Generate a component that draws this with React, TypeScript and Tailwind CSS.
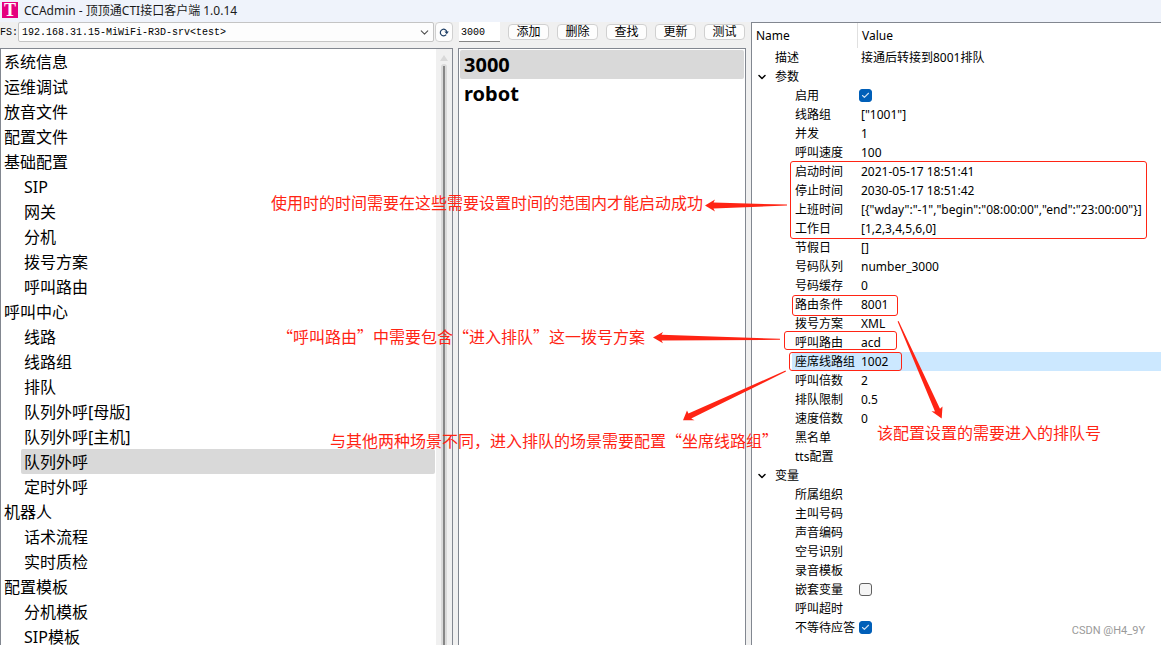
import { useState } from "react";
import { Check, ChevronDown } from "lucide-react";

interface TreeItem {
  label: string;
  child?: boolean;
}

interface Property {
  name: string;
  value?: string;
  checked?: boolean;
  group?: boolean;
  top?: boolean;
}

const TREE: TreeItem[] = [
  { label: "系统信息" },
  { label: "运维调试" },
  { label: "放音文件" },
  { label: "配置文件" },
  { label: "基础配置" },
  { label: "SIP", child: true },
  { label: "网关", child: true },
  { label: "分机", child: true },
  { label: "拨号方案", child: true },
  { label: "呼叫路由", child: true },
  { label: "呼叫中心" },
  { label: "线路", child: true },
  { label: "线路组", child: true },
  { label: "排队", child: true },
  { label: "队列外呼[母版]", child: true },
  { label: "队列外呼[主机]", child: true },
  { label: "队列外呼", child: true },
  { label: "定时外呼", child: true },
  { label: "机器人" },
  { label: "话术流程", child: true },
  { label: "实时质检", child: true },
  { label: "配置模板" },
  { label: "分机模板", child: true },
  { label: "SIP模板", child: true },
];

const PROPERTIES: Property[] = [
  { name: "描述", value: "接通后转接到8001排队", top: true },
  { name: "参数", group: true },
  { name: "启用", checked: true },
  { name: "线路组", value: '["1001"]' },
  { name: "并发", value: "1" },
  { name: "呼叫速度", value: "100" },
  { name: "启动时间", value: "2021-05-17 18:51:41" },
  { name: "停止时间", value: "2030-05-17 18:51:42" },
  { name: "上班时间", value: '[{"wday":"-1","begin":"08:00:00","end":"23:00:00"}]' },
  { name: "工作日", value: "[1,2,3,4,5,6,0]" },
  { name: "节假日", value: "[]" },
  { name: "号码队列", value: "number_3000" },
  { name: "号码缓存", value: "0" },
  { name: "路由条件", value: "8001" },
  { name: "拨号方案", value: "XML" },
  { name: "呼叫路由", value: "acd" },
  { name: "座席线路组", value: "1002" },
  { name: "呼叫倍数", value: "2" },
  { name: "排队限制", value: "0.5" },
  { name: "速度倍数", value: "0" },
  { name: "黑名单" },
  { name: "tts配置" },
  { name: "变量", group: true },
  { name: "所属组织" },
  { name: "主叫号码" },
  { name: "声音编码" },
  { name: "空号识别" },
  { name: "录音模板" },
  { name: "嵌套变量", checked: false },
  { name: "呼叫超时" },
  { name: "不等待应答", checked: true },
];

const ACTIONS = ["添加", "删除", "查找", "更新", "测试"];
const QUEUES = ["3000", "robot"];

function TitleBar() {
  return (
    <header className="flex h-[22px] shrink-0 items-start gap-[6px] bg-[#eff3fb] pl-[2px] pt-[2px]">
      <span className="size-4 bg-[#e5007f] text-center font-['Liberation_Serif',serif] text-[18px] font-bold leading-4 text-white">
        T
      </span>
      <h1 className="text-[12px] leading-[18px] text-[#1a1a1a]">CCAdmin - 顶顶通CTI接口客户端 1.0.14</h1>
    </header>
  );
}

function ServerBar() {
  return (
    <div className="flex h-[26px] shrink-0 items-start">
      <label htmlFor="server" className="w-[18px] shrink-0 font-['Liberation_Mono',monospace] text-[10px] leading-[22px]">
        FS:
      </label>
      <div className="grid h-5 min-w-0 flex-1">
        <select
          id="server"
          className="h-5 w-full appearance-none rounded-[2px] border border-[#c4c4c4] bg-[#fdfdfd] pl-[3px] pt-[2px] font-['Liberation_Mono',monospace] text-[10px] leading-4 [grid-area:1/1]"
        >
          <option>192.168.31.15-MiWiFi-R3D-srv&lt;test&gt;</option>
        </select>
        <ChevronDown
          size={13}
          strokeWidth={2}
          className="pointer-events-none mr-[3px] self-center justify-self-end text-[#505050] [grid-area:1/1]"
        />
      </div>
      <button
        type="button"
        aria-label="刷新"
        className="ml-px flex h-5 w-[18px] items-center justify-center rounded-[4px] border border-[#d0d0d0] bg-[#fdfdfd] pt-px"
      >
        <svg width="10" height="9" viewBox="0 0 10 9" fill="none" stroke="#1f3f66" strokeWidth="1.2">
          <path d="M7.2 6.6A3.3 3.3 0 1 1 7.9 4.2" />
          <path d="M5.4 3.6H9.8L7.8 6.2Z" fill="#1f3f66" stroke="none" />
        </svg>
      </button>
    </div>
  );
}

function NavTree() {
  const [active, setActive] = useState("队列外呼");

  return (
    <nav className="flex min-h-0 flex-1 overflow-hidden border border-b-0 border-[#828790] bg-white">
      <ul className="min-w-0 flex-1 pr-px">
        {TREE.map((item) => (
          <li key={item.label} className={item.child ? "pl-5" : ""}>
            <button
              type="button"
              onClick={() => setActive(item.label)}
              className={`block h-[25px] w-full rounded-[2px] pl-[3px] pt-[2px] text-left text-[16px] leading-[23px] ${
                active === item.label ? "bg-[#d9d9d9]" : ""
              }`}
            >
              {item.label}
            </button>
          </li>
        ))}
      </ul>
      <div className="flex w-4 flex-col items-center bg-[#f0f0f0] pt-[6px]">
        <svg width="8" height="6" viewBox="0 0 8 6" className="shrink-0">
          <path d="M4 0 8 6H0Z" fill="#d9d9d9" />
        </svg>
        <div className="mt-[3px] flex w-[6px] flex-1 justify-center rounded-t bg-[#d9d9d9] pt-[2px]">
          <div className="w-[2px] bg-[#868686]" />
        </div>
      </div>
    </nav>
  );
}

function QueuePanel() {
  const [current, setCurrent] = useState("3000");

  return (
    <section className="flex min-h-0 min-w-0 flex-col">
      <div className="flex h-[26px] shrink-0 items-start justify-between px-px">
        <input
          aria-label="队列号码"
          defaultValue="3000"
          className="h-5 w-[41px] border-b border-[#868686] bg-white px-[2px] pt-[2px] font-['Liberation_Mono',monospace] text-[10px] leading-4"
        />
        {ACTIONS.map((action) => (
          <button
            key={action}
            type="button"
            className="mt-[2px] h-4 w-[41px] rounded-[4px] border border-[#d0d0d0] bg-[#fdfdfd] text-center text-[12px] leading-[14px]"
          >
            {action}
          </button>
        ))}
      </div>
      <ul className="min-h-0 flex-1 overflow-hidden border border-b-0 border-[#828790] bg-white p-px">
        {QUEUES.map((queue) => (
          <li key={queue}>
            <button
              type="button"
              onClick={() => setCurrent(queue)}
              className={`block h-[29px] w-full rounded-[2px] pl-1 text-left text-[20px] font-bold leading-[29px] ${
                current === queue ? "bg-[#d9d9d9]" : ""
              }`}
            >
              {queue}
            </button>
          </li>
        ))}
      </ul>
    </section>
  );
}

function PropertyCheckbox({ id, checked }: { id: string; checked: boolean }) {
  return (
    <span className="grid w-[13px]">
      <input
        id={id}
        type="checkbox"
        defaultChecked={checked}
        className="peer size-[13px] appearance-none rounded-[3px] border border-[#606060] bg-[#f5f5f5] [grid-area:1/1] checked:border-[#005fb8] checked:bg-[#005fb8]"
      />
      <Check
        size={9}
        strokeWidth={3}
        className="pointer-events-none invisible place-self-center text-[#cfe2f4] [grid-area:1/1] peer-checked:visible"
      />
    </span>
  );
}

function PropertyRow({ property, selected, onSelect }: { property: Property; selected: boolean; onSelect: () => void }) {
  const { name, value, checked, group, top } = property;
  const isCheckbox = checked !== undefined;

  return (
    <tr onClick={onSelect} className="h-[19px]">
      <td className="p-0">
        {group || top ? (
          <div className="flex h-[19px] items-center pl-1">
            <span className="flex w-[19px]">{group && <ChevronDown size={12} strokeWidth={3} />}</span>
            {name}
          </div>
        ) : (
          <div className={`ml-10 h-[19px] whitespace-nowrap pl-[3px] ${selected ? "bg-[#cce8ff]" : ""}`}>
            {isCheckbox ? <label htmlFor={name}>{name}</label> : name}
          </div>
        )}
      </td>
      <td className={`whitespace-nowrap py-0 pr-0 ${isCheckbox ? "pl-px" : "pl-[3px]"} ${selected ? "bg-[#cce8ff]" : ""}`}>
        {isCheckbox ? <PropertyCheckbox id={name} checked={checked} /> : value}
      </td>
    </tr>
  );
}

function PropertyPanel() {
  const [selected, setSelected] = useState("座席线路组");

  return (
    <section className="min-h-0 min-w-0 overflow-hidden border-l border-t border-[#828790] bg-white">
      <table className="w-full table-fixed border-separate border-spacing-0 text-[12px] leading-[19px]">
        <thead>
          <tr className="h-[25px] text-left">
            <th className="w-[106px] border-r border-[#e0e0e0] py-0 pl-1 font-normal">Name</th>
            <th className="py-0 pl-1 font-normal">Value</th>
          </tr>
        </thead>
        <tbody>
          {PROPERTIES.map((property) => (
            <PropertyRow
              key={property.name}
              property={property}
              selected={selected === property.name}
              onSelect={() => setSelected(property.name)}
            />
          ))}
        </tbody>
      </table>
    </section>
  );
}

// Red notes drawn on top of the window
function Annotations() {
  return (
    <div className="pointer-events-none absolute inset-0 overflow-hidden whitespace-nowrap font-['Noto_Sans_CJK_SC',sans-serif] text-[16px] leading-5 text-[#ff2414]">
      <div className="absolute left-[790px] top-[161px] h-[78px] w-[357px] rounded-[3px] border border-current" />
      <div className="absolute left-[792px] top-[295px] h-[21px] w-[106px] rounded-[3px] border border-current" />
      <div className="absolute left-[784px] top-[331px] h-[19px] w-[113px] rounded-[3px] border border-current" />
      <div className="absolute left-[789px] top-[352px] h-[19px] w-[113px] rounded-[3px] border border-current" />

      <svg width="1161" height="645" viewBox="0 0 1161 645" fill="currentColor" className="absolute left-0 top-0">
        <path d="M705 205.5 715 199.5 713.5 202.6 787 204.6V205.6L713.5 208.6 715 211.5Z" />
        <path d="M653 337.5 663 332 661.5 334.8 780 338.8V339.8L661.5 340.6 663 343.2Z" />
        <path d="M683 420.3 687 410.5 688.4 413.6 785.5 370.6 786 371.6 691.2 418.6 694.5 420.3Z" />
        <path d="M941.7 418.5 931.5 411.2 935 411.4 897.6 321.4 898.6 321 940 408.8 942.5 406.5Z" />
      </svg>

      <p className="absolute left-[271px] top-[192px]">使用时的时间需要在这些需要设置时间的范围内才能启动成功</p>
      <p className="absolute left-[277px] top-[326px]">“呼叫路由”中需要包含“进入排队”这一拨号方案</p>
      <p className="absolute left-[330px] top-[430px]">与其他两种场景不同，进入排队的场景需要配置“坐席线路组”</p>
      <p className="absolute left-[877px] top-[422px]">该配置设置的需要进入的排队号</p>
      <p className="absolute bottom-1 right-4 font-[Roboto,sans-serif] text-[11px] text-[#9a9a9a]">CSDN @H4_9Y</p>
    </div>
  );
}

export default function App() {
  return (
    <div
      lang="zh-CN"
      className="relative flex h-screen flex-col overflow-hidden bg-[#f0f0f0] font-['Noto_Sans','Noto_Sans_CJK_SC',sans-serif] text-black"
    >
      <TitleBar />
      <main className="grid min-h-0 flex-1 grid-cols-[453fr_288fr_410fr] grid-rows-[minmax(0,1fr)] gap-x-[5px]">
        <div className="flex min-h-0 min-w-0 flex-col">
          <ServerBar />
          <NavTree />
        </div>
        <QueuePanel />
        <PropertyPanel />
      </main>
      <Annotations />
    </div>
  );
}
